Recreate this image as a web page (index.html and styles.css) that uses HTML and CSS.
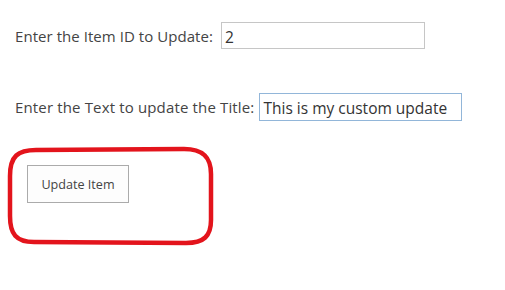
FILE: index.html
```html
<!DOCTYPE html>
<html>
<head>
<meta charset="utf-8">
<link rel="stylesheet" href="styles.css">
</head>
<body>
<div class="page">
  <div class="row row-id">
    <label class="label">Enter the Item ID to Update:</label>
    <input class="field field-id" type="text" value="2">
  </div>
  <div class="row row-title">
    <label class="label">Enter the Text to update the Title:</label>
    <input class="field field-title focused" type="text" value="This is my custom update">
  </div>
  <div class="action">
    <button class="btn">Update Item</button>
    <svg class="circle" width="210" height="100" viewBox="0 0 210 100">
      <path d="M30 4 L178 3 C196 3 205 10 205 28 L205 74 C205 90 198 97 180 97 L28 96 C10 96 4 88 4 70 L4 30 C4 10 12 4 30 4 Z" fill="none" stroke="#e3141c" stroke-width="4.5"/>
    </svg>
  </div>
</div>
</body>
</html>
```
FILE: styles.css
```css
html, body {
  margin: 0;
  padding: 0;
  background: #fff;
  min-height: 290px;
}
.page {
  padding: 22px 0 0 15px;
  font-family: "Open Sans", "Noto Sans", sans-serif;
  color: #444;
  min-height: 268px;
}
.row {
  display: flex;
  align-items: center;
  gap: 8px;
}
.row-title {
  margin-top: 44px;
  gap: 5px;
}
.label {
  font-size: 15px;
  letter-spacing: 0.05px;
}
.row-title .label {
  letter-spacing: 0.15px;
}
.field {
  box-sizing: border-box;
  height: 27px;
  border: 1px solid #c6c6c6;
  font-family: "Open Sans", "Noto Sans", sans-serif;
  font-size: 15.5px;
  color: #333;
  padding: 2px 3px 0;
  margin: 0;
  outline: none;
}
.field-id {
  width: 204px;
}
.field-title {
  width: 203px;
  height: 28px;
}
.focused {
  border-color: #92b6d9;
}
.action {
  position: relative;
  margin-top: 44px;
  padding-left: 12px;
}
.btn {
  width: 102px;
  height: 38px;
  border: 1px solid #ababab;
  background: #fdfdfd;
  font-family: "Open Sans", "Noto Sans", sans-serif;
  font-size: 12.6px;
  color: #444;
  padding: 0;
}
.circle {
  position: absolute;
  left: -9px;
  top: -19px;
}
```
